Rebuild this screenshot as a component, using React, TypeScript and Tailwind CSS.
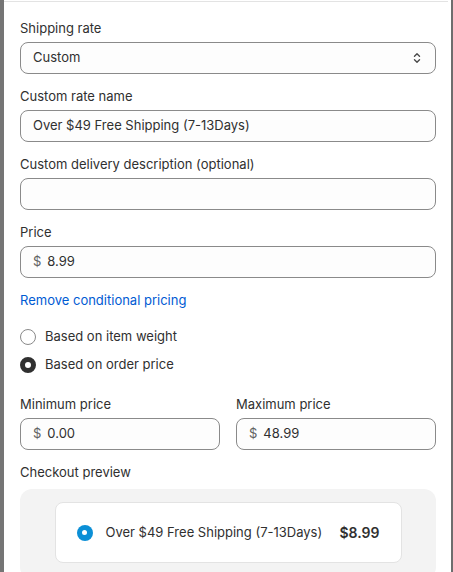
import React from "react";

function Label({ children }: { children: React.ReactNode }) {
  return <div className="h-4 leading-4 text-[13px] text-[#303030]">{children}</div>;
}

function MoneyInput({ value }: { value: string }) {
  return (
    <div className="h-8 rounded-lg border border-[#8a8a8a] bg-[#fdfdfd] flex items-center px-3 text-[13px]">
      <span className="text-[#616161] mr-[6px]">$</span>
      <span className="text-[#303030]">{value}</span>
    </div>
  );
}

function Radio({ checked, label }: { checked: boolean; label: string }) {
  return (
    <div className="flex items-center h-5 gap-[9px]">
      <span
        className={
          checked
            ? "w-4 h-4 rounded-full border-[5px] border-[#303030] bg-white box-border"
            : "w-4 h-4 rounded-full border border-[#8a8a8a] bg-white box-border"
        }
      />
      <span className="text-[13px] text-[#303030]">{label}</span>
    </div>
  );
}

export default function App() {
  return (
    <div
      className="w-[453px] h-[572px] flex overflow-hidden bg-white"
      style={{ fontFamily: "Inter, 'Noto Sans', sans-serif" }}
    >
      <div className="w-1 h-full bg-[#757575] shrink-0" />
      <div className="flex-1 h-full pt-px">
        <div className="border-t border-[#e3e3e3] h-full">
          <div className="pl-4 pr-[12px] pt-[18px] flex flex-col">
            <Label>Shipping rate</Label>
            <div className="mt-[6px] h-8 rounded-lg border border-[#8a8a8a] bg-[#fdfdfd] flex items-center justify-between px-3 text-[13px] text-[#303030]">
              <span>Custom</span>
              <svg width="12" height="14" viewBox="0 0 12 14" fill="none">
                <path d="M3.5 5.2 L6 2.8 L8.5 5.2" stroke="#4a4a4a" strokeWidth="1.4" strokeLinecap="round" strokeLinejoin="round" />
                <path d="M3.5 8.8 L6 11.2 L8.5 8.8" stroke="#4a4a4a" strokeWidth="1.4" strokeLinecap="round" strokeLinejoin="round" />
              </svg>
            </div>

            <div className="mt-[14px]">
              <Label>Custom rate name</Label>
            </div>
            <div className="mt-[6px] h-8 rounded-lg border border-[#8a8a8a] bg-[#fdfdfd] flex items-center px-3 text-[13px] text-[#303030]">
              Over $49 Free Shipping (7-13Days)
            </div>

            <div className="mt-[14px]">
              <Label>Custom delivery description (optional)</Label>
            </div>
            <div className="mt-[6px] h-8 rounded-lg border border-[#8a8a8a] bg-[#fdfdfd]" />

            <div className="mt-[14px]">
              <Label>Price</Label>
            </div>
            <div className="mt-[6px]">
              <MoneyInput value="8.99" />
            </div>

            <div className="mt-[14px] h-4 leading-4 text-[13px] text-[#005bd3]">Remove conditional pricing</div>

            <div className="mt-[19px] flex flex-col gap-2">
              <Radio checked={false} label="Based on item weight" />
              <Radio checked={true} label="Based on order price" />
            </div>

            <div className="mt-[21px] grid grid-cols-2 gap-4">
              <div>
                <Label>Minimum price</Label>
                <div className="mt-[6px]">
                  <MoneyInput value="0.00" />
                </div>
              </div>
              <div>
                <Label>Maximum price</Label>
                <div className="mt-[6px]">
                  <MoneyInput value="48.99" />
                </div>
              </div>
            </div>

            <div className="mt-[14px]">
              <Label>Checkout preview</Label>
            </div>
            <div className="mt-[9px] rounded-xl bg-[#f3f3f3] pt-[13px] pb-4 flex justify-center">
              <div className="w-[347px] h-[61px] rounded-lg bg-white border border-[#e3e3e3] flex items-center pl-[21px] pr-[21px]">
                <span className="w-4 h-4 rounded-full bg-[#0b8fd6] flex items-center justify-center shrink-0">
                  <span className="w-[5px] h-[5px] rounded-full bg-white" />
                </span>
                <span className="ml-[13px] text-[13px] text-[#303030]">Over $49 Free Shipping (7-13Days)</span>
                <span className="ml-auto text-[14px] font-semibold text-[#303030]">$8.99</span>
              </div>
            </div>
          </div>
        </div>
      </div>
      <div className="w-[3px] h-full bg-white shrink-0" />
      <div className="w-[2px] h-full bg-[#6e6e6e] shrink-0" />
    </div>
  );
}
